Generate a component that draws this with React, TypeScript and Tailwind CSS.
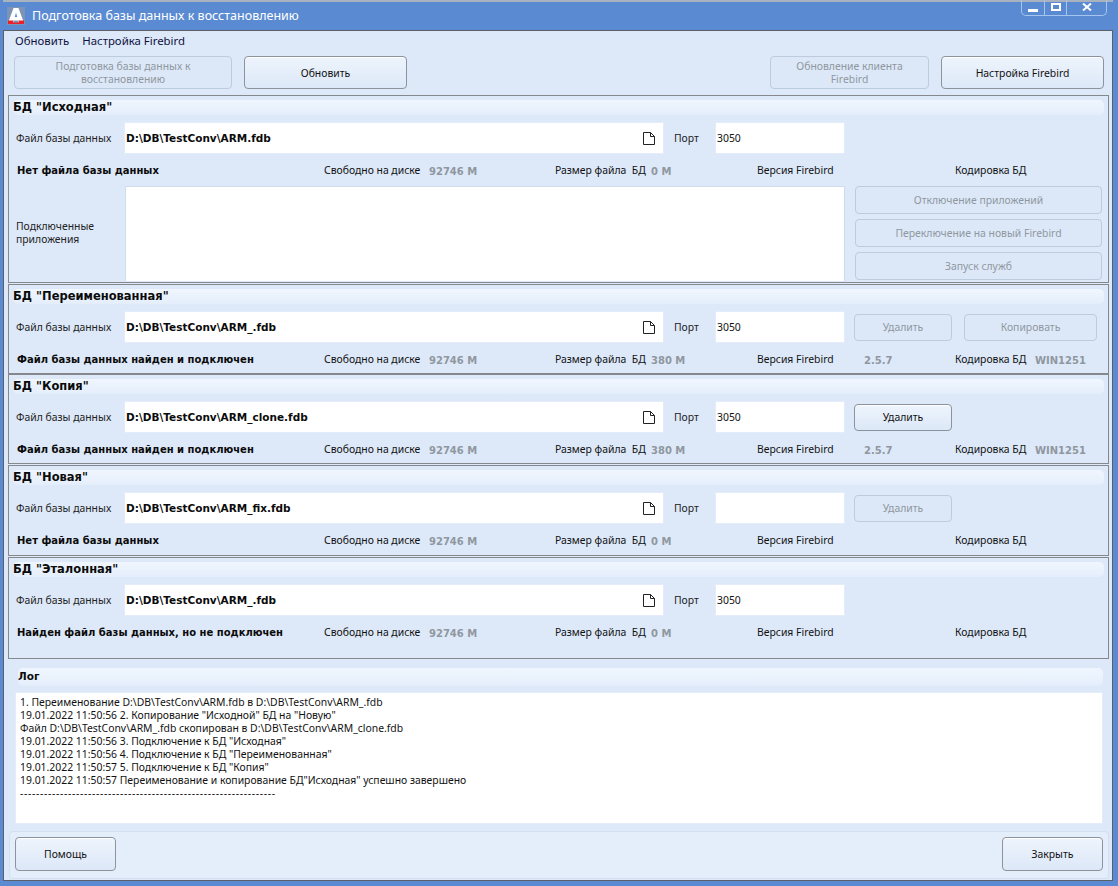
import React from 'react';

const btnBase = "flex items-center justify-center text-center rounded-[4px] leading-[13px] text-[10.4px]";
const btnOn = "border border-[#8c939c] bg-gradient-to-b from-[#eef4fc] to-[#dce8f8] text-[#111111] shadow-[inset_0_1px_0_#ffffff]";
const btnOff = "border border-[#bccbde] bg-[#dce8f8] text-[#8f979f]";

function Btn({ label, off, className }: { label: string; off?: boolean; className: string }) {
  return <div className={`${btnBase} ${off ? btnOff : btnOn} ${className}`}>{label}</div>;
}

function FileIcon() {
  return (
    <svg width="14" height="15" viewBox="0 0 14 15" fill="none" className="shrink-0">
      <path d="M1.5 1.5H8.5L12.5 5.5V13.5H1.5Z" stroke="#222222" strokeWidth="1" fill="#ffffff" />
      <path d="M8.5 1.5V5.5H12.5" stroke="#222222" strokeWidth="1" />
    </svg>
  );
}

function Heading({ title }: { title: string }) {
  return (
    <div className="h-[15px] mx-[4px] mt-[4px] rounded-[5px] bg-gradient-to-b from-[#f0f6fe] to-[#e4eefb] flex items-center font-['DejaVu_Sans'] font-bold text-[11.5px] text-[#0b0b0b] leading-none">
      {title}
    </div>
  );
}

function FileRow({ path, port, children }: { path: string; port?: string; children?: React.ReactNode }) {
  return (
    <div className="flex items-center h-[32px] mt-[7px]">
      <div className="w-[115px] pl-[7px] pt-[1px] shrink-0 text-[#222222]">Файл базы данных</div>
      <div className="w-[540px] h-[32px] shrink-0 bg-white border border-[#e3ecf8] flex items-center justify-between pl-[1px] pr-[7px] font-['DejaVu_Sans'] font-bold text-[10.5px] text-[#0b0b0b]">
        <span className="pt-[2px]">{path}</span>
        <FileIcon />
      </div>
      <div className="w-[51px] pl-[10px] pt-[1px] shrink-0 text-[#222222]">Порт</div>
      <div className="w-[130px] h-[32px] shrink-0 bg-white border border-[#e3ecf8] flex items-center pl-[1px] pt-[1px] text-[#111111]">{port}</div>
      {children}
    </div>
  );
}

function StatusRow({ status, free, size, version, codepage }: { status: string; free: string; size: string; version?: string; codepage?: string }) {
  const val = "font-['DejaVu_Sans'] font-bold text-[10px] text-[#8f979f]";
  return (
    <div className="flex items-center h-[18px] mt-[8px] text-[#111111] whitespace-nowrap">
      <div className="w-[315px] pl-[8px] pb-[1px] shrink-0 font-['DejaVu_Sans'] font-bold text-[10px] text-[#0b0b0b]">{status}</div>
      <div className="w-[105px] shrink-0">Свободно на диске</div>
      <div className={`w-[126px] shrink-0 ${val}`}>{free}</div>
      <div className="w-[96px] shrink-0">Размер файла&nbsp; БД</div>
      <div className={`w-[106px] shrink-0 ${val}`}>{size}</div>
      <div className="w-[107px] shrink-0">Версия Firebird</div>
      <div className={`w-[91px] shrink-0 ${val}`}>{version}</div>
      <div className="w-[80px] shrink-0">Кодировка БД</div>
      <div className={`shrink-0 ${val}`}>{codepage}</div>
    </div>
  );
}

function Section({ title, height, children }: { title: string; height: string; children: React.ReactNode }) {
  return (
    <div className={`border border-[#85888c] ${height} shrink-0`}>
      <Heading title={title} />
      {children}
    </div>
  );
}

export default function App() {
  return (
    <div className="w-[1118px] h-[886px] bg-[#5a8bd2] flex flex-col pl-[3px] pr-[5px] pb-[5px] font-['Noto_Sans',sans-serif] text-[10.4px] overflow-hidden">
      <div className="h-[30px] shrink-0 relative flex items-center border-t-2 border-[#a9b3c0] text-white text-[12.5px]">
        <svg width="18" height="18" viewBox="0 0 18 18" className="ml-[4px] mr-[7px] mb-[1px]">
          <rect x="0" y="0" width="18" height="18" fill="#7d93b5" />
          <path d="M1 16L6.5 1H11.5L17 16H12L11 13.5H7L6 16Z" fill="#ffffff" />
          <path d="M7.8 10L9 5.5L10.2 10Z" fill="#5a8bd2" />
          <path d="M1 17V13.5H6.6L6 15.5H12L11.4 13.5H17V17Z" fill="#e8202a" />
        </svg>
        <span>Подготовка базы данных к восстановлению</span>
        <div className="absolute top-[-2px] right-[6px] w-[86px] h-[16px] border border-t-0 border-[#a5c5ef] rounded-b-[5px] flex">
          <div className="w-[23px] border-r border-[#a5c5ef] flex items-end justify-center pb-[3px]"><div className="w-[10px] h-[3px] bg-white" /></div>
          <div className="w-[22px] border-r border-[#a5c5ef] flex items-center justify-center pb-[2px]"><div className="w-[10px] h-[8px] border-2 border-white" /></div>
          <div className="flex-1 flex items-center justify-center pb-[2px]">
            <svg width="10" height="8" viewBox="0 0 10 8"><path d="M1 0.5L9 7.5M9 0.5L1 7.5" stroke="#ffffff" strokeWidth="2" /></svg>
          </div>
        </div>
      </div>

      <div className="flex-1 bg-[#dde9f9] border border-[#5b6068] flex flex-col pl-[4px] pr-[3px] text-[#111111]">
        <div className="h-[20px] flex items-center gap-[13px] pl-[7px] text-[11.4px] text-[#101040] shrink-0">
          <span>Обновить</span>
          <span>Настройка Firebird</span>
        </div>
        <div className="flex h-[33px] mt-[5px] pl-[6px] pr-[5px] shrink-0">
          <Btn off label="Подготовка базы данных к восстановлению" className="w-[218px] px-[20px]" />
          <Btn label="Обновить" className="w-[163px] ml-[12px] pt-[1px]" />
          <Btn off label="Обновление клиента Firebird" className="w-[159px] ml-auto px-[16px]" />
          <Btn label="Настройка Firebird" className="w-[163px] ml-[12px] pt-[1px]" />
        </div>

        <div className="mt-[6px] flex flex-col">
          <Section title={'БД "Исходная"'} height="h-[188px]">
            <FileRow path="D:\DB\TestConv\ARM.fdb" port="3050" />
            <StatusRow status="Нет файла базы данных" free="92746 M" size="0 M" />
            <div className="flex mt-[6px]">
              <div className="w-[116px] pl-[7px] pb-[2px] shrink-0 self-center leading-[13px] text-[#222222]">Подключенные приложения</div>
              <div className="w-[720px] h-[95px] bg-white border-t border-x border-[#cfdcee] shrink-0" />
              <div className="flex flex-col gap-[5px] ml-[10px] w-[247px]">
                <Btn off label="Отключение приложений" className="h-[28px]" />
                <Btn off label="Переключение на новый Firebird" className="h-[28px]" />
                <Btn off label="Запуск служб" className="h-[28px]" />
              </div>
            </div>
          </Section>
          <Section title={'БД "Переименованная"'} height="h-[90px] mt-[1px]">
            <FileRow path="D:\DB\TestConv\ARM_.fdb" port="3050">
              <Btn off label="Удалить" className="w-[98px] h-[27px] ml-[9px]" />
              <Btn off label="Копировать" className="w-[133px] h-[27px] ml-[12px]" />
            </FileRow>
            <StatusRow status="Файл базы данных найден и подключен" free="92746 M" size="380 M" version="2.5.7" codepage="WIN1251" />
          </Section>
          <Section title={'БД "Копия"'} height="h-[90px]">
            <FileRow path="D:\DB\TestConv\ARM_clone.fdb" port="3050">
              <Btn label="Удалить" className="w-[98px] h-[27px] ml-[9px]" />
            </FileRow>
            <StatusRow status="Файл базы данных найден и подключен" free="92746 M" size="380 M" version="2.5.7" codepage="WIN1251" />
          </Section>
          <Section title={'БД "Новая"'} height="h-[91px] mt-[1px]">
            <FileRow path="D:\DB\TestConv\ARM_fix.fdb">
              <Btn off label="Удалить" className="w-[98px] h-[27px] ml-[9px]" />
            </FileRow>
            <StatusRow status="Нет файла базы данных" free="92746 M" size="0 M" />
          </Section>
          <Section title={'БД "Эталонная"'} height="h-[102px] mt-[1px]">
            <FileRow path="D:\DB\TestConv\ARM_.fdb" port="3050" />
            <StatusRow status="Найден файл базы данных, но не подключен" free="92746 M" size="0 M" />
          </Section>
        </div>

        <div className="h-[18px] mt-[9px] ml-[10px] mr-[6px] rounded-[5px] bg-gradient-to-b from-[#f0f6fe] to-[#e4eefb] flex items-center font-['DejaVu_Sans'] font-bold text-[10.5px] text-[#0b0b0b] shrink-0">Лог</div>
        <div className="h-[132px] mt-[6px] ml-[7px] mr-[6px] bg-white border border-[#e3ecf8] pl-[4px] pt-[3px] leading-[13px] text-[#111111] whitespace-nowrap shrink-0">
          <div>1. Переименование D:\DB\TestConv\ARM.fdb в D:\DB\TestConv\ARM_.fdb</div>
          <div>19.01.2022 11:50:56 2. Копирование "Исходной" БД на "Новую"</div>
          <div>Файл D:\DB\TestConv\ARM_.fdb скопирован в D:\DB\TestConv\ARM_clone.fdb</div>
          <div>19.01.2022 11:50:56 3. Подключение к БД "Исходная"</div>
          <div>19.01.2022 11:50:56 4. Подключение к БД "Переименованная"</div>
          <div>19.01.2022 11:50:57 5. Подключение к БД "Копия"</div>
          <div>19.01.2022 11:50:57 Переименование и копирование БД"Исходная" успешно завершено</div>
          <div className="tracking-[0.65px]">----------------------------------------------------------------</div>
        </div>
        <div className="h-[48px] mt-[7px] ml-[1px] rounded-[4px] bg-[#e4eefb] border border-[#d3dfef] flex items-start justify-between pt-[5px] px-[5px] shrink-0">
          <Btn label="Помощь" className="w-[101px] h-[34px]" />
          <Btn label="Закрыть" className="w-[101px] h-[34px]" />
        </div>
      </div>
    </div>
  );
}
